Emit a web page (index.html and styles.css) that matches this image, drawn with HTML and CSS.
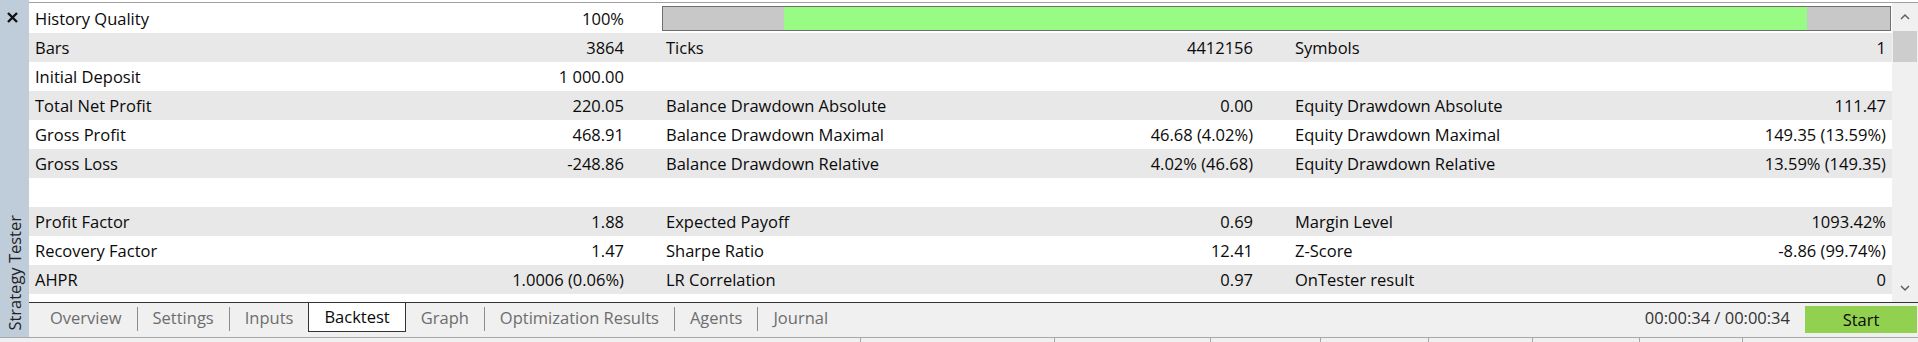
FILE: index.html
```html
<!DOCTYPE html>
<html lang="en">
<head>
  <meta charset="UTF-8">
  <title>Strategy Tester</title>
  <link rel="stylesheet" href="styles.css">
</head>
<body>
  <div class="tester">
    <div class="main">
      <aside class="sidebar">
        <svg class="close-icon" viewBox="0 0 11 11"><path d="M1 1L10 10M10 1L1 10"/></svg>
        <div class="sidebar-title">Strategy Tester</div>
      </aside>

      <div class="content">
        <div class="report">
          <div class="rows">
            <div class="row">
              <div class="cell"><span>History Quality</span><span>100%</span></div>
              <div class="progress">
                <div class="progress-fill" style="margin-left: 121px; width: 1023px;"></div>
              </div>
            </div>
            <div class="row">
              <div class="cell"><span>Bars</span><span>3864</span></div>
              <div class="cell"><span>Ticks</span><span>4412156</span></div>
              <div class="cell"><span>Symbols</span><span>1</span></div>
            </div>
            <div class="row">
              <div class="cell"><span>Initial Deposit</span><span>1 000.00</span></div>
            </div>
            <div class="row">
              <div class="cell"><span>Total Net Profit</span><span>220.05</span></div>
              <div class="cell"><span>Balance Drawdown Absolute</span><span>0.00</span></div>
              <div class="cell"><span>Equity Drawdown Absolute</span><span>111.47</span></div>
            </div>
            <div class="row">
              <div class="cell"><span>Gross Profit</span><span>468.91</span></div>
              <div class="cell"><span>Balance Drawdown Maximal</span><span>46.68 (4.02%)</span></div>
              <div class="cell"><span>Equity Drawdown Maximal</span><span>149.35 (13.59%)</span></div>
            </div>
            <div class="row">
              <div class="cell"><span>Gross Loss</span><span>-248.86</span></div>
              <div class="cell"><span>Balance Drawdown Relative</span><span>4.02% (46.68)</span></div>
              <div class="cell"><span>Equity Drawdown Relative</span><span>13.59% (149.35)</span></div>
            </div>
            <div class="row"></div>
            <div class="row">
              <div class="cell"><span>Profit Factor</span><span>1.88</span></div>
              <div class="cell"><span>Expected Payoff</span><span>0.69</span></div>
              <div class="cell"><span>Margin Level</span><span>1093.42%</span></div>
            </div>
            <div class="row">
              <div class="cell"><span>Recovery Factor</span><span>1.47</span></div>
              <div class="cell"><span>Sharpe Ratio</span><span>12.41</span></div>
              <div class="cell"><span>Z-Score</span><span>-8.86 (99.74%)</span></div>
            </div>
            <div class="row">
              <div class="cell"><span>AHPR</span><span>1.0006 (0.06%)</span></div>
              <div class="cell"><span>LR Correlation</span><span>0.97</span></div>
              <div class="cell"><span>OnTester result</span><span>0</span></div>
            </div>
          </div>

          <div class="scrollbar">
            <div class="scroll-btn">
              <svg class="chevron" viewBox="0 0 10 7"><polyline points="1,6 5,2 9,6"/></svg>
            </div>
            <div class="scroll-thumb"></div>
            <div class="scroll-track"></div>
            <div class="scroll-btn">
              <svg class="chevron" viewBox="0 0 10 7"><polyline points="1,1 5,5 9,1"/></svg>
            </div>
          </div>
        </div>

        <div class="tabbar">
          <div class="tabs">
            <div class="tab">Overview</div>
            <span class="tab-sep"></span>
            <div class="tab">Settings</div>
            <span class="tab-sep"></span>
            <div class="tab">Inputs</div>
            <div class="tab active">Backtest</div>
            <div class="tab">Graph</div>
            <span class="tab-sep"></span>
            <div class="tab">Optimization Results</div>
            <span class="tab-sep"></span>
            <div class="tab">Agents</div>
            <span class="tab-sep"></span>
            <div class="tab">Journal</div>
          </div>
          <div class="run">
            <span class="elapsed">00:00:34 / 00:00:34</span>
            <button class="start-btn">Start</button>
          </div>
        </div>
      </div>
    </div>

    <div class="statusbar">
      <div class="status-cell"></div>
      <div class="status-cell"></div>
      <div class="status-cell"></div>
      <div class="status-cell"></div>
      <div class="status-cell"></div>
      <div class="status-cell"></div>
      <div class="status-cell"></div>
      <div class="status-cell"></div>
      <div class="status-cell"></div>
    </div>
  </div>
</body>
</html>
```

FILE: styles.css
```css
* {
  margin: 0;
  padding: 0;
  box-sizing: border-box;
}

body {
  font-family: "Open Sans", "Noto Sans", sans-serif;
  font-size: 16.5px;
  color: #0a0a0a;
  background-color: #fff;
  overflow: hidden;
}

.tester {
  width: 1918px;
  height: 342px;
  display: flex;
  flex-direction: column;
}

.main {
  display: flex;
  height: 337px;
}

/* left vertical caption */
.sidebar {
  width: 29px;
  background-color: #bfcddb;
  display: flex;
  flex-direction: column;
  justify-content: space-between;
  padding: 12px 0 6px;
}

.close-icon {
  width: 11px;
  height: 11px;
  margin-left: 7px;
  stroke: #111;
  stroke-width: 2.4;
  fill: none;
}

.sidebar-title {
  writing-mode: vertical-rl;
  transform: rotate(180deg);
  align-self: center;
  color: #222;
  line-height: 1.2;
  white-space: nowrap;
}

.content {
  flex: 1;
  display: flex;
  flex-direction: column;
  padding-top: 2px;
}

.report {
  display: flex;
  height: 300px;
  border-top: 1px solid #a0a0a0;
}

.rows {
  flex: 1;
  padding-top: 1px;
}

.row {
  display: grid;
  grid-template-columns: 589px 587px 591px;
  column-gap: 42px;
  align-items: center;
  height: 29px;
  padding: 0 6px;
}

.row:nth-child(even) {
  background-color: #e8e8e8;
}

.cell {
  display: flex;
  justify-content: space-between;
  white-space: nowrap;
}

.progress {
  grid-column: 2 / 4;
  margin: 0 -5px 0 -4px;
  height: 25px;
  border: 1px solid #6f6f6f;
  background-color: #c8c8c8;
  display: flex;
}

.progress-fill {
  background-color: #98fb84;
}

/* scrollbar */
.scrollbar {
  width: 26px;
  background-color: #f0f0f0;
  display: flex;
  flex-direction: column;
  align-items: center;
}

.scroll-btn {
  height: 27px;
  display: flex;
  align-items: center;
  justify-content: center;
}

.chevron {
  width: 10px;
  height: 7px;
  fill: none;
  stroke: #606060;
  stroke-width: 1.5;
}

.scroll-thumb {
  width: 24px;
  height: 31px;
  margin-top: 1px;
  background-color: #cdcdcd;
}

.scroll-track {
  flex: 1;
}

/* tabs */
.tabbar {
  display: flex;
  height: 35px;
  border-top: 1px solid #333;
  background-color: #f0f0f0;
}

.tabs {
  display: flex;
  align-items: flex-start;
  padding-left: 6px;
}

.tab {
  height: 29px;
  line-height: 29px;
  padding: 0 15px;
  color: #6d6d6d;
  white-space: nowrap;
}

.tab.active {
  background-color: #fff;
  color: #0a0a0a;
  border: 1px solid #333;
  border-top: none;
  line-height: 28px;
}

.tab-sep {
  width: 1px;
  height: 24px;
  margin-top: 4px;
  background-color: #8c8c8c;
}

.run {
  margin-left: auto;
  display: flex;
  align-items: flex-start;
}

.elapsed {
  line-height: 29px;
  color: #333;
  margin-right: 15px;
  white-space: nowrap;
}

.start-btn {
  width: 112px;
  height: 27px;
  margin: 3px 1px 0 0;
  border: none;
  background-color: #92d050;
  font: inherit;
  color: #0a0a0a;
  line-height: 27px;
  text-align: center;
}

/* bottom status strip */
.statusbar {
  height: 5px;
  border-top: 1px solid #a8a8a8;
  background-color: #f0f0f0;
  display: grid;
  grid-template-columns: 860px 194px 156px 110px 108px 104px 107px 103px 1fr;
}

.status-cell + .status-cell {
  border-left: 1px solid #a8a8a8;
}
```
